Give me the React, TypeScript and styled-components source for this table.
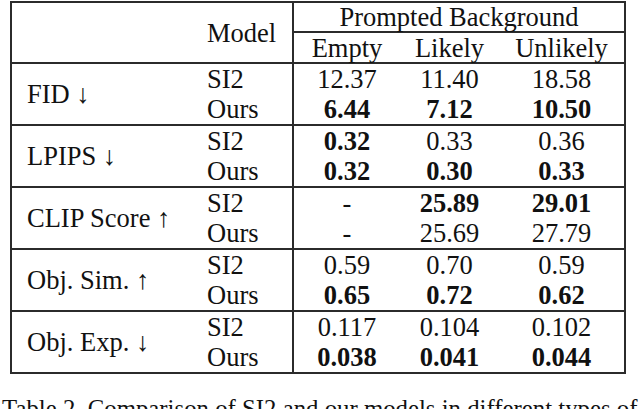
import React from 'react';
import styled, { createGlobalStyle } from 'styled-components';

const SERIF = `'Liberation Serif', 'Times New Roman', 'DejaVu Serif', serif`;
const LINE = '#2b2b2b';

const GlobalStyle = createGlobalStyle`
  html, body {
    margin: 0;
    padding: 0;
    background: #ffffff;
  }
  body {
    font-family: ${SERIF};
    color: #111111;
  }
`;

const Page = styled.div`
  width: 640px;
  height: 409px;
  overflow: hidden;
  padding: 1px 0 0 10px;
  box-sizing: border-box;
  font-family: ${SERIF};
  font-size: 26.5px;
`;

const Table = styled.div`
  width: 616px;
  box-sizing: border-box;
  border: 2px solid ${LINE};
`;

const Section = styled.div<{ first?: boolean }>`
  display: grid;
  grid-template-columns: 195px 85px 1fr;
  height: ${({ first }) => (first ? '59px' : '60px')};
  border-top: ${({ first }) => (first ? 'none' : `2px solid ${LINE}`)};
`;

const MetricCell = styled.div`
  display: flex;
  align-items: center;
  padding-left: 15px;
  padding-bottom: 1px;
  white-space: nowrap;
`;

const ModelHead = styled.div`
  grid-column: 2;
  display: flex;
  align-items: center;
  padding-bottom: 1px;
`;

const ModelCell = styled.div`
  display: flex;
  flex-direction: column;
  justify-content: center;
  line-height: 30px;
  padding-bottom: 2px;
`;

const DataBlock = styled.div`
  border-left: 2px solid ${LINE};
  display: grid;
  grid-template-columns: 106px 99px 1fr;
  grid-auto-rows: 30px;
  align-content: center;
  padding-bottom: 2px;
`;

const HeadBlock = styled.div`
  grid-column: 3;
  border-left: 2px solid ${LINE};
  display: flex;
  flex-direction: column;
`;

const GroupTitle = styled.div`
  height: 28px;
  line-height: 28px;
  text-align: center;
  border-bottom: 2px solid ${LINE};
`;

const SubHeads = styled.div`
  flex: 1;
  display: grid;
  grid-template-columns: 106px 99px 1fr;
  align-items: center;
  padding-bottom: 1px;
`;

const Value = styled.div<{ best?: boolean }>`
  text-align: center;
  line-height: 30px;
  font-weight: ${({ best }) => (best ? 700 : 400)};
`;

const Caption = styled.div`
  margin-top: 20px;
  margin-left: -8px;
  white-space: nowrap;
  line-height: 30px;
  font-size: 24.8px;
`;

type Cell = { v: string; best?: boolean };

interface Group {
  metric: string;
  si2: Cell[];
  ours: Cell[];
}

const groups: Group[] = [
  {
    metric: 'FID ↓',
    si2: [{ v: '12.37' }, { v: '11.40' }, { v: '18.58' }],
    ours: [
      { v: '6.44', best: true },
      { v: '7.12', best: true },
      { v: '10.50', best: true },
    ],
  },
  {
    metric: 'LPIPS ↓',
    si2: [{ v: '0.32', best: true }, { v: '0.33' }, { v: '0.36' }],
    ours: [
      { v: '0.32', best: true },
      { v: '0.30', best: true },
      { v: '0.33', best: true },
    ],
  },
  {
    metric: 'CLIP Score ↑',
    si2: [{ v: '-' }, { v: '25.89', best: true }, { v: '29.01', best: true }],
    ours: [{ v: '-' }, { v: '25.69' }, { v: '27.79' }],
  },
  {
    metric: 'Obj. Sim. ↑',
    si2: [{ v: '0.59' }, { v: '0.70' }, { v: '0.59' }],
    ours: [
      { v: '0.65', best: true },
      { v: '0.72', best: true },
      { v: '0.62', best: true },
    ],
  },
  {
    metric: 'Obj. Exp. ↓',
    si2: [{ v: '0.117' }, { v: '0.104' }, { v: '0.102' }],
    ours: [
      { v: '0.038', best: true },
      { v: '0.041', best: true },
      { v: '0.044', best: true },
    ],
  },
];

const App: React.FC = () => {
  return (
    <Page>
      <GlobalStyle />
      <Table>
        <Section first>
          <ModelHead>Model</ModelHead>
          <HeadBlock>
            <GroupTitle>Prompted Background</GroupTitle>
            <SubHeads>
              <Value>Empty</Value>
              <Value>Likely</Value>
              <Value>Unlikely</Value>
            </SubHeads>
          </HeadBlock>
        </Section>
        {groups.map((g) => (
          <Section key={g.metric}>
            <MetricCell>{g.metric}</MetricCell>
            <ModelCell>
              <span>SI2</span>
              <span>Ours</span>
            </ModelCell>
            <DataBlock>
              {g.si2.map((c, i) => (
                <Value key={`s${i}`} best={c.best}>
                  {c.v}
                </Value>
              ))}
              {g.ours.map((c, i) => (
                <Value key={`o${i}`} best={c.best}>
                  {c.v}
                </Value>
              ))}
            </DataBlock>
          </Section>
        ))}
      </Table>
      <Caption>Table 2. Comparison of SI2 and our models in different types of</Caption>
    </Page>
  );
};

export default App;
